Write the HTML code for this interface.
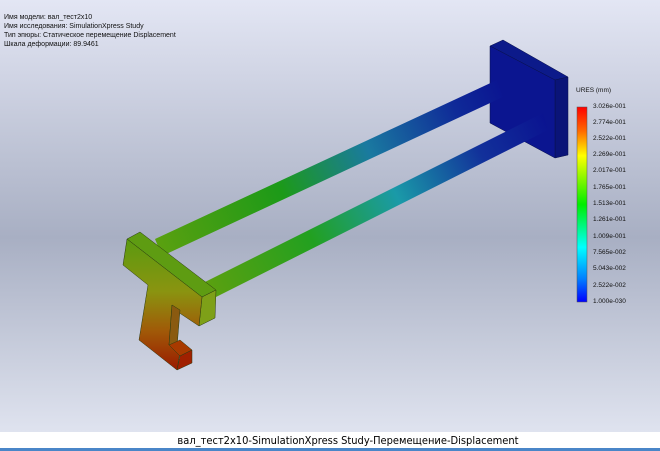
<!DOCTYPE html>
<html><head><meta charset="utf-8"><style>
body{margin:0;width:660px;height:451px;overflow:hidden;background:#fff;font-family:"Liberation Sans",sans-serif}
</style></head><body>
<svg width="660" height="451" xmlns="http://www.w3.org/2000/svg" style="position:absolute;left:0;top:0">
<defs>
<linearGradient id="bg" x1="0" y1="0" x2="0" y2="1">
<stop offset="0" stop-color="#e3e6f4"/><stop offset="0.55" stop-color="#a8afc3"/><stop offset="1" stop-color="#dfe3ef"/>
</linearGradient>
<linearGradient id="leg" x1="0" y1="0" x2="0" y2="1">
<stop offset="0" stop-color="#ff0000"/><stop offset="0.12" stop-color="#ff6600"/><stop offset="0.25" stop-color="#ffff00"/><stop offset="0.5" stop-color="#00ee00"/><stop offset="0.72" stop-color="#00ffff"/><stop offset="0.88" stop-color="#0080ff"/><stop offset="1" stop-color="#0000ff"/>
</linearGradient>
<linearGradient id="rod" x1="160" y1="250" x2="510" y2="90" gradientUnits="userSpaceOnUse">
<stop offset="0" stop-color="#5aa010"/><stop offset="0.35" stop-color="#1c9a18"/><stop offset="0.6" stop-color="#1a7aa0"/><stop offset="0.85" stop-color="#0f2a98"/><stop offset="1" stop-color="#0a1290"/>
</linearGradient>
<linearGradient id="rod2" x1="210" y1="290" x2="550" y2="120" gradientUnits="userSpaceOnUse">
<stop offset="0" stop-color="#5aa010"/><stop offset="0.3" stop-color="#22a020"/><stop offset="0.55" stop-color="#1a9aa8"/><stop offset="0.8" stop-color="#12309a"/><stop offset="1" stop-color="#0a1290"/>
</linearGradient>
<linearGradient id="tg" x1="0" y1="0" x2="0" y2="1">
<stop offset="0" stop-color="#5a9a10"/><stop offset="0.4" stop-color="#8a9410"/><stop offset="0.7" stop-color="#a05a08"/><stop offset="1" stop-color="#9a1a00"/>
</linearGradient>
</defs>
<rect width="660" height="432" fill="url(#bg)"/>
<g font-size="7" fill="#111">
<text x="4" y="19">Имя модели: вал_тест2x10</text>
<text x="4" y="28">Имя  исследования: SimulationXpress Study</text>
<text x="4" y="37">Тип эпюры: Статическое перемещение Displacement</text>
<text x="4" y="46">Шкала деформации: 89.9461</text>
</g>
<polygon points="490,46 503,40 568,77 555,80" fill="#0c1a8a" stroke="#08104a" stroke-width="0.5"/>
<polygon points="555,80 568,77 568,155 555,158" fill="#0a1478" stroke="#08104a" stroke-width="0.5"/>
<polygon points="490,46 555,80 555,158 490,123" fill="#0b1590" stroke="#08104a" stroke-width="0.5"/>
<path d="M155,239 L497,80 L503,97 L162,256 Z" fill="url(#rod)"/>
<path d="M205,282 L543,113 L548,130 L212,299 Z" fill="url(#rod2)"/>
<polygon points="127,239 140,232 216,290 202,297" fill="#5e9c12" stroke="#2a3a10" stroke-width="0.5"/>
<polygon points="202,297 216,290 215,318 199,326" fill="#7ea018" stroke="#2a3a10" stroke-width="0.5"/>
<polygon points="127,239 202,297 199,326 178,312 172,305 169,345 180,352 177,370 139,340 148,285 123,265" fill="url(#tg)" stroke="#2a3a10" stroke-width="0.5"/>
<polygon points="172,305 180,310 177,347 169,345" fill="#8a5a10" stroke="#2a3a10" stroke-width="0.5"/>
<polygon points="169,345 180,340 192,350 180,356" fill="#a83a00" stroke="#2a3a10" stroke-width="0.5"/>
<polygon points="180,356 192,350 192,363 177,370" fill="#a02000" stroke="#2a3a10" stroke-width="0.5"/>
<text x="576" y="92" font-size="6.5" fill="#111">URES (mm)</text>
<rect x="577" y="107" width="10" height="195" fill="url(#leg)" stroke="#555" stroke-width="0.5"/>
<g font-size="6.5" fill="#111">
<text x="593" y="108">3.026e-001</text><text x="593" y="124">2.774e-001</text><text x="593" y="140">2.522e-001</text><text x="593" y="156">2.269e-001</text><text x="593" y="172">2.017e-001</text><text x="593" y="189">1.765e-001</text><text x="593" y="205">1.513e-001</text><text x="593" y="221">1.261e-001</text><text x="593" y="238">1.009e-001</text><text x="593" y="254">7.565e-002</text><text x="593" y="270">5.043e-002</text><text x="593" y="287">2.522e-002</text><text x="593" y="303">1.000e-030</text>
</g>
<rect y="432" width="660" height="16" fill="#fff"/>
<text x="348" y="444" font-size="11" text-anchor="middle" fill="#000" font-family="DejaVu Sans Condensed, Liberation Sans, sans-serif">вал_тест2x10-SimulationXpress  Study-Перемещение-Displacement</text>
<rect y="448" width="660" height="3" fill="#4a86c8"/>
</svg>
</body></html>
